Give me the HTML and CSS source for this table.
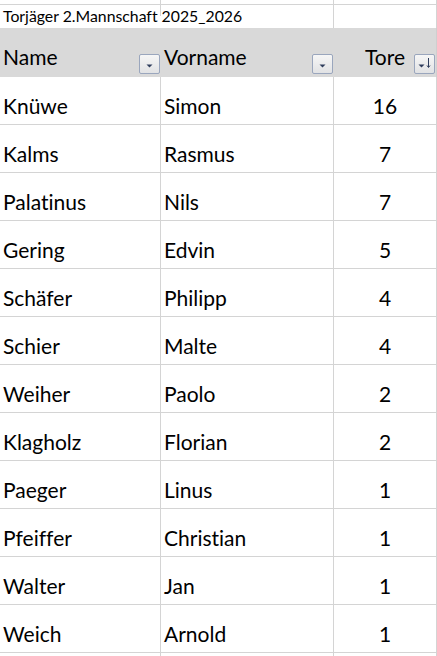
FILE: index.html
```html
<!DOCTYPE html>
<html lang="de">
<head>
<meta charset="utf-8">
<title>Torjäger 2.Mannschaft 2025_2026</title>
<link rel="stylesheet" href="styles.css">
</head>
<body>
<div class="sheet">
  <div class="row row-top">
    <div class="cell"></div><div class="cell"></div><div class="cell"></div>
  </div>
  <div class="row row-title">
    <div class="cell span2">Torjäger 2.Mannschaft 2025_2026</div><div class="cell"></div>
  </div>
  <div class="row row-head">
    <div class="cell hcell"><span>Name</span><span class="fbtn"><svg width="21" height="20" viewBox="0 0 21 20"><path d="M7.5 10.5h6l-3 3z" fill="#2f3d5c"/></svg></span></div>
    <div class="cell hcell"><span>Vorname</span><span class="fbtn"><svg width="21" height="20" viewBox="0 0 21 20"><path d="M7.5 10.5h6l-3 3z" fill="#2f3d5c"/></svg></span></div>
    <div class="cell hcell hnum"><span class="htxt">Tore</span><span class="fbtn"><svg width="21" height="20" viewBox="0 0 21 20"><path d="M4.5 10.5h6l-3 3z" fill="#2f3d5c"/><path d="M14.5 4v9" stroke="#2f3d5c" stroke-width="1"/><path d="M13 11.5l1.5 2 1.5-2" stroke="#2f3d5c" stroke-width="1" fill="none"/></svg></span></div>
  </div>
  <div class="row"><div class="cell">Knüwe</div><div class="cell">Simon</div><div class="cell num">16</div></div>
  <div class="row"><div class="cell">Kalms</div><div class="cell">Rasmus</div><div class="cell num">7</div></div>
  <div class="row"><div class="cell">Palatinus</div><div class="cell">Nils</div><div class="cell num">7</div></div>
  <div class="row"><div class="cell">Gering</div><div class="cell">Edvin</div><div class="cell num">5</div></div>
  <div class="row"><div class="cell">Schäfer</div><div class="cell">Philipp</div><div class="cell num">4</div></div>
  <div class="row"><div class="cell">Schier</div><div class="cell">Malte</div><div class="cell num">4</div></div>
  <div class="row"><div class="cell">Weiher</div><div class="cell">Paolo</div><div class="cell num">2</div></div>
  <div class="row"><div class="cell">Klagholz</div><div class="cell">Florian</div><div class="cell num">2</div></div>
  <div class="row"><div class="cell">Paeger</div><div class="cell">Linus</div><div class="cell num">1</div></div>
  <div class="row"><div class="cell">Pfeiffer</div><div class="cell">Christian</div><div class="cell num">1</div></div>
  <div class="row"><div class="cell">Walter</div><div class="cell">Jan</div><div class="cell num">1</div></div>
  <div class="row"><div class="cell">Weich</div><div class="cell">Arnold</div><div class="cell num">1</div></div>
  <div class="row row-bottom"><div class="cell"></div><div class="cell"></div><div class="cell"></div></div>
</div>
</body>
</html>
```

FILE: styles.css
```css
html, body {
  margin: 0;
  padding: 0;
  background: #ffffff;
}
body {
  font-family: "Lato", "Noto Sans", sans-serif;
  font-variant-ligatures: none;
  font-feature-settings: "liga" 0, "clig" 0;
  color: #000;
  overflow: hidden;
}
.sheet {
  width: 437px;
}
.row {
  display: grid;
  grid-template-columns: 161px 173px 103px;
  height: 48px;
  border-bottom: 1px solid #d4d4d4;
  box-sizing: border-box;
}
.cell {
  border-right: 1px solid #d4d4d4;
  box-sizing: border-box;
  font-size: 21px;
  padding: 16px 0 0 3px;
  white-space: nowrap;
  overflow: hidden;
}
.num {
  text-align: center;
  padding-left: 0;
}
.row-top {
  height: 5px;
}
.row-title {
  height: 23px;
  border-bottom: none;
}
.row-title .cell {
  font-size: 15.8px;
  padding: 1px 0 0 3px;
}
.span2 {
  grid-column: span 2;
  overflow: visible;
}
.row-head {
  height: 49px;
  background: #d9d9d9;
  border-bottom: none;
}
.row-head .cell {
  border-right: none;
}
.row-head .cell:last-child {
  border-right: 1px solid #cfcfcf;
}
.hcell {
  display: flex;
  align-items: flex-start;
  justify-content: space-between;
  padding: 16px 1px 0 3px;
}
.hnum {
  justify-content: flex-end;
  gap: 9px;
}
.fbtn {
  width: 21px;
  height: 20px;
  margin-top: 10px;
  border: 1px solid #9aa6bd;
  border-radius: 2px;
  box-sizing: border-box;
  background: linear-gradient(#f6f6f6, #e1e2e4);
  display: block;
  position: relative;
  overflow: hidden;
}
.fbtn svg {
  position: absolute;
  left: -1px;
  top: -1px;
}
.row-bottom {
  height: 10px;
  border-bottom: none;
}
```
